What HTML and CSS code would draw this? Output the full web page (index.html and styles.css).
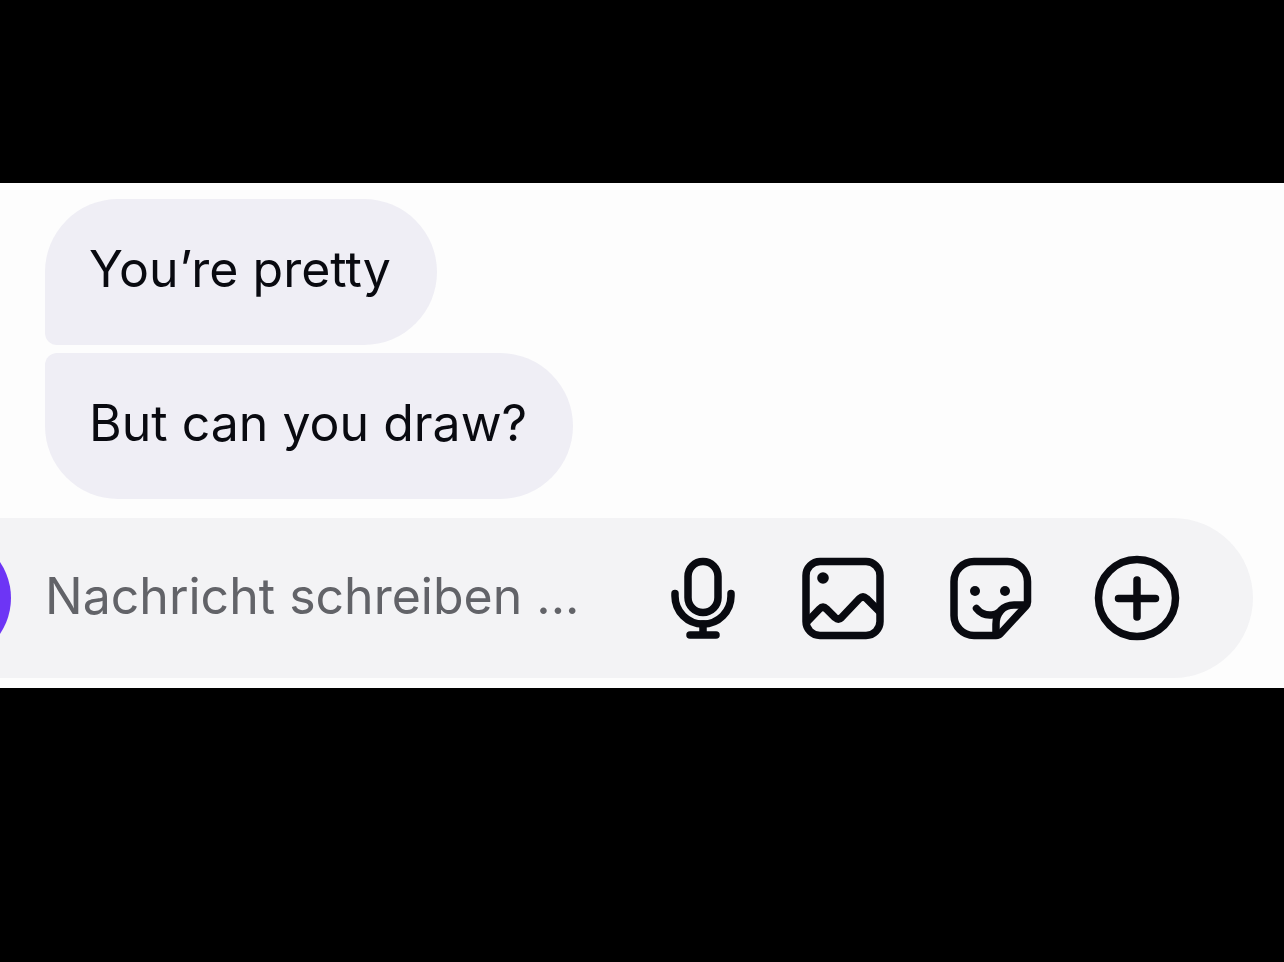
FILE: index.html
```html
<!DOCTYPE html>
<html lang="de">
<head>
  <meta charset="UTF-8">
  <meta name="viewport" content="width=device-width, initial-scale=1.0">
  <title>Chat</title>
  <link rel="stylesheet" href="styles.css">
</head>
<body>
<main class="chat">
  <div class="messages">
    <p class="bubble bubble-first">You’re pretty</p>
    <p class="bubble bubble-last">But can you draw?</p>
  </div>

  <form class="composer">
    <button type="button" class="camera-button" aria-label="Kamera"></button>
    <input type="text" class="message-input" placeholder="Nachricht schreiben ..." aria-label="Nachricht schreiben">

    <div class="actions">
      <button type="button" class="icon-button" aria-label="Sprachnachricht">
        <svg width="74" height="88" viewBox="0 0 74 88">
          <rect x="22" y="7.5" width="30" height="51" rx="15"></rect>
          <path d="M9 39.5V42a28 28 0 0 0 56 0v-2.5"></path>
          <path d="M37 70v11M24 81h26"></path>
        </svg>
      </button>
      <button type="button" class="icon-button" aria-label="Foto">
        <svg width="88" height="88" viewBox="0 0 88 88">
          <rect x="7" y="7.5" width="74" height="74" rx="14"></rect>
          <circle class="dot" cx="24" cy="24" r="5.8"></circle>
          <path d="M8 68L20.500 55Q24 51.500 27.500 55L36 63.500Q39.500 66.500 42.500 63.500L60.500 44.500Q64 41.500 67.500 44.500L80 57"></path>
        </svg>
      </button>
      <button type="button" class="icon-button" aria-label="Sticker">
        <svg width="88" height="88" viewBox="0 0 88 88">
          <path d="M50 81.500H28a20 20 0 0 1-20-20v-34a20 20 0 0 1 20-20h33.500a20 20 0 0 1 20 20V48c0 2-1 3.500-2 4.500L54.500 79.500c-1 1.300-2.500 2-4.500 2z"></path>
          <path d="M50 80V70c0-11 7-19 18-19h12"></path>
          <path d="M30.500 54.500c4 5 9 7 15 6.500 3 0 5-1 8-3"></path>
          <circle class="dot" cx="29" cy="37" r="5"></circle>
          <circle class="dot" cx="59" cy="37" r="5"></circle>
        </svg>
      </button>
      <button type="button" class="icon-button" aria-label="Mehr">
        <svg width="88" height="88" viewBox="0 0 88 88">
          <circle cx="44" cy="44" r="38.5"></circle>
          <path d="M44 26v37M25.500 44.500h37"></path>
        </svg>
      </button>
    </div>
  </form>
</main>
</body>
</html>
```
FILE: styles.css
```css
:root {
  --bubble-color: #efeef5;
  --composer-color: #f3f3f5;
  --text-color: #090a10;
  --hint-color: #626368;
  --accent-color: #6d35f5;
}

* {
  box-sizing: border-box;
}

body {
  font-family: Inter, "Liberation Sans", sans-serif;
  font-size: 50px;
  line-height: 60px;
  margin: 0;
  padding: 183px 0;
  color: var(--text-color);
  background-color: #000;
}

.chat {
  padding: 16px 31px 10px 0;
  background-color: #fdfdfd;
  overflow: hidden;
}

.messages {
  display: flex;
  flex-direction: column;
  align-items: flex-start;
  gap: 8px;
  padding-left: 45px;
  margin-bottom: 19px;
}

.bubble {
  margin: 0;
  padding: 40px 46px 46px 44px;
  border-radius: 73px;
  background-color: var(--bubble-color);
}

.bubble-first {
  border-bottom-left-radius: 12px;
}

.bubble-last {
  border-top-left-radius: 12px;
}

/* the bar runs past the left edge, only the rim of the camera button shows */
.composer {
  display: flex;
  align-items: center;
  height: 160px;
  margin-left: -133px;
  padding: 0 72px 0 16px;
  border-radius: 80px;
  background-color: var(--composer-color);
}

.camera-button {
  flex-shrink: 0;
  width: 128px;
  height: 128px;
  margin-right: 34px;
  border: none;
  border-radius: 50%;
  background-color: var(--accent-color);
}

.message-input {
  flex: 1;
  min-width: 0;
  padding: 0 0 4px;
  border: none;
  outline: none;
  font: inherit;
  color: inherit;
  background: none;
}

.message-input::placeholder {
  color: var(--hint-color);
  opacity: 1;
}

.actions {
  display: flex;
  flex-shrink: 0;
  gap: 59px;
}

.icon-button {
  padding: 0;
  border: none;
  background: none;
  cursor: pointer;
}

.icon-button svg {
  display: block;
  fill: none;
  stroke: var(--text-color);
  stroke-width: 7.5;
  stroke-linecap: round;
  stroke-linejoin: round;
}

.icon-button .dot {
  fill: var(--text-color);
  stroke: none;
}
```
